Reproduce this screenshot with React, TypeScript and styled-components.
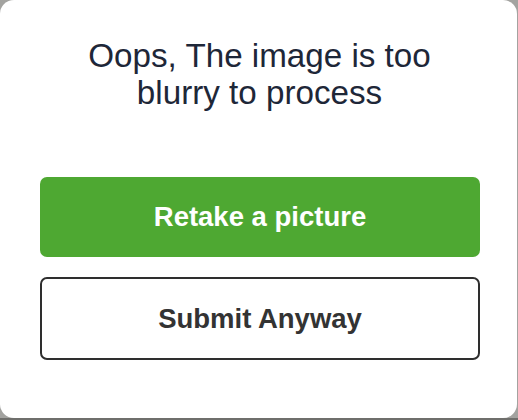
import styled, { createGlobalStyle } from "styled-components"

const GlobalStyle = createGlobalStyle`
    html, body {
        margin: 0;
        padding: 0;
        background: #a3a3a0;
    }
    body {
        width: 518px;
        height: 420px;
        overflow: hidden;
        font-family: "Liberation Sans", Arial, Helvetica, sans-serif;
    }
`

const Backdrop = styled.div`
    width: 518px;
    height: 420px;
    box-sizing: border-box;
    padding: 0 1px 2px 0;
    background: linear-gradient(to bottom, #a3a3a0 0, #a3a3a0 418px, #6f6f6c 418px);
`

const Card = styled.div`
    width: 517px;
    height: 418px;
    box-sizing: border-box;
    background: #ffffff;
    border-radius: 14px;
    padding: 37px 38px 0 40px;
    display: flex;
    flex-direction: column;
    align-items: stretch;
`

const Title = styled.h1`
    margin: 0 0 66px;
    font-size: 33.2px;
    line-height: 37px;
    font-weight: 400;
    color: #1e2738;
    text-align: center;
`

const Button = styled.button<{ $primary?: boolean }>`
    box-sizing: border-box;
    width: 440px;
    height: ${(props) => (props.$primary ? "80px" : "83px")};
    margin-bottom: ${(props) => (props.$primary ? "20px" : "0")};
    border-radius: 7px;
    border: ${(props) => (props.$primary ? "none" : "2px solid #2e2e2e")};
    background: ${(props) => (props.$primary ? "#4ea832" : "#ffffff")};
    color: ${(props) => (props.$primary ? "#ffffff" : "#333333")};
    font-family: "Liberation Sans", Arial, Helvetica, sans-serif;
    font-size: 27.5px;
    font-weight: 700;
    cursor: pointer;
    padding: 0;
`

const App = () => {
    return (
        <>
            <GlobalStyle />
            <Backdrop>
                <Card>
                    <Title>
                        Oops, The image is too
                        <br />
                        blurry to process
                    </Title>
                    <Button $primary>Retake a picture</Button>
                    <Button>Submit Anyway</Button>
                </Card>
            </Backdrop>
        </>
    )
}

export default App
